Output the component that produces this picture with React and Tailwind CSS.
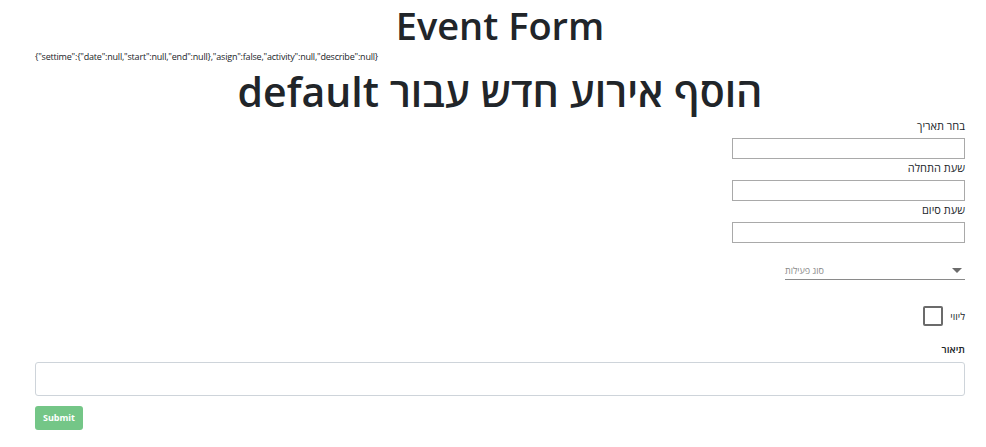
import React, { useState } from 'react';

export default function App() {
  const [form] = useState({
    settime: { date: null, start: null, end: null },
    asign: false,
    activity: null,
    describe: null,
  });

  return (
    <div className="min-h-[447px] bg-white text-[#212529] font-['Open_Sans','Noto_Sans',sans-serif]">
      <div className="pl-[35px] pr-[21px] pt-[1px]">
        <h1 className="text-center text-[38px] leading-[48px] font-semibold">Event Form</h1>
        <div className="text-[9px] leading-[12px] mt-[2px] tracking-[-0.2px]">{JSON.stringify(form)}</div>
        <h1 dir="rtl" className="text-center text-[41px] leading-[50px] font-semibold mt-[3px]">
          הוסף אירוע חדש עבור default
        </h1>

        <form dir="rtl" className="flex flex-col items-start">
          <label className="text-[11px] font-medium leading-[14px] mt-[3px]">בחר תאריך</label>
          <input className="w-[233px] h-[21px] border border-[#a9a9a9] mt-[5px]" />
          <label className="text-[11px] font-medium leading-[14px] mt-[2px]">שעת התחלה</label>
          <input className="w-[233px] h-[21px] border border-[#a9a9a9] mt-[5px]" />
          <label className="text-[11px] font-medium leading-[14px] mt-[2px]">שעת סיום</label>
          <input className="w-[233px] h-[21px] border border-[#a9a9a9] mt-[5px]" />

          <div dir="ltr" className="w-[180px] mt-[20px] border-b border-[#8a8a8a] h-[17px] flex items-center justify-between">
            <span dir="rtl" className="text-[9px] text-[#8a8a8a] leading-[12px]">סוג פעילות</span>
            <svg width="10" height="6" viewBox="0 0 10 6" className="mr-[3px]">
              <path d="M0 0 L10 0 L5 5 Z" fill="#6b6b6b" />
            </svg>
          </div>

          <div className="flex items-center mt-[26px]">
            <span className="text-[10px] font-medium leading-[12px] ml-[7px]">ליווי</span>
            <span className="w-[20px] h-[20px] border-2 border-[#6b6b6b] rounded-[2px]" />
          </div>

          <label className="text-[10px] font-semibold leading-[14px] mt-[16px]">תיאור</label>
          <textarea className="w-full h-[34px] border border-[#ced4da] rounded-[3px] mt-[6px] resize-none" />

          <div dir="ltr" className="w-full flex mt-[10px]">
            <button type="button" className="bg-[#74c687] text-white text-[9px] font-bold rounded-[3px] w-[48px] h-[24px]">
              Submit
            </button>
          </div>
        </form>
      </div>
    </div>
  );
}
